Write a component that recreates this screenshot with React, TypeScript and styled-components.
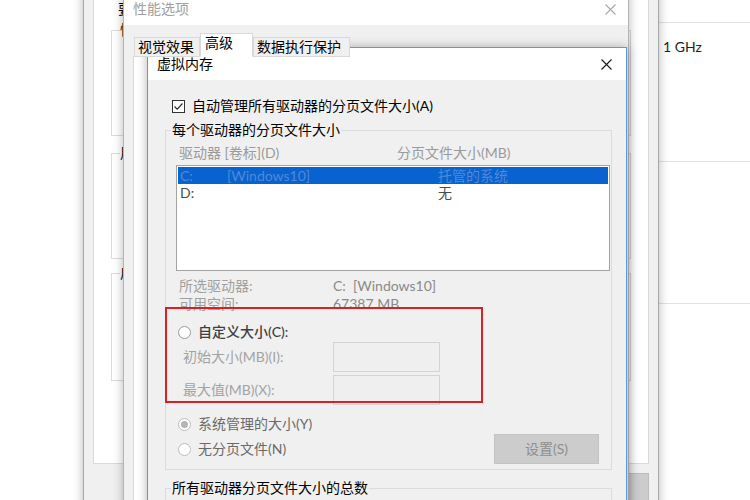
import React from "react";
import styled, { createGlobalStyle } from "styled-components";

const GlobalStyle = createGlobalStyle`
  html, body { margin: 0; padding: 0; background: #fff; }
  body { font-family: Lato, "Noto Sans CJK SC", sans-serif; font-size: 14px; }
  * { box-sizing: border-box; }
`;

const Desktop = styled.div`
  position: relative;
  width: 750px;
  height: 500px;
  overflow: hidden;
  background: #fff;
`;

/* ---------- back: system control panel ---------- */
const SystemPanel = styled.div`
  position: absolute;
  inset: 0;
  display: grid;
  grid-template-columns: 659px 1fr;
`;
const InfoColumn = styled.div`
  grid-column: 2;
  display: flex;
  flex-direction: column;
`;
const InfoSection = styled.div<{ $h: number }>`
  height: ${(p) => p.$h}px;
  border-bottom: 1px solid #e2e2e2;
  padding: 15px 0 0 4px;
  color: #1e1e1e;
  line-height: 18px;
`;

/* ---------- generic window chrome ---------- */
const Window = styled.div<{ $l: number; $t: number; $w: number; $h: number; $border: string }>`
  position: absolute;
  left: ${(p) => p.$l}px;
  top: ${(p) => p.$t}px;
  width: ${(p) => p.$w}px;
  height: ${(p) => p.$h}px;
  background: #f0f0f0;
  border: 1px solid ${(p) => p.$border};
  box-shadow: 0 0 10px rgba(0, 0, 0, 0.28);
  display: flex;
  flex-direction: column;
`;
const TitleBar = styled.div<{ $active?: boolean }>`
  height: 32px;
  flex: none;
  background: #fff;
  display: flex;
  align-items: center;
  padding-left: 9px;
  color: ${(p) => (p.$active ? "#000" : "#a0a0a0")};
  line-height: 18px;
`;
const TitleText = styled.span`
  flex: 1;
`;
const CloseBtn = styled.div<{ $w: number }>`
  width: ${(p) => p.$w}px;
  height: 100%;
  display: flex;
  align-items: center;
  justify-content: center;
`;

const CloseIcon = ({ color, size = 11 }: { color: string; size?: number }) => (
  <svg width={size} height={size} viewBox="0 0 11 11">
    <path d="M0.5 0.5 L10.5 10.5 M10.5 0.5 L0.5 10.5" stroke={color} strokeWidth="1.1" fill="none" />
  </svg>
);

/* ---------- system properties (behind) ---------- */
const SysBody = styled.div`
  flex: 1;
  padding: 20px 9px 0;
  display: flex;
  flex-direction: column;
`;
const SysPage = styled.div`
  height: 473px;
  flex: none;
  background: #fff;
  border: 1px solid #d9d9d9;
  padding: 8px 17px 0 17px;
  display: flex;
  flex-direction: column;
  line-height: 18px;
  color: #000;
`;
const SysNote = styled.span`
  margin-left: 7px;
`;
const SysGroup = styled.div<{ $mt: number; $h: number }>`
  position: relative;
  margin-top: ${(p) => p.$mt}px;
  height: ${(p) => p.$h}px;
  border: 1px solid #dcdcdc;
`;
const SysGroupLabel = styled.span`
  position: absolute;
  top: -10px;
  left: 8px;
  background: #fff;
  color: #000;
  line-height: 18px;
`;
const SysButtonRow = styled.div`
  display: flex;
  justify-content: flex-end;
  margin-top: 9px;
`;
const SysButton = styled.div`
  width: 75px;
  height: 28px;
  background: #cccccc;
  border: 1px solid #bdbdbd;
`;

/* ---------- performance options ---------- */
const PerfBody = styled.div`
  flex: 1;
  padding: 8px 9px 0 9px;
  display: flex;
  flex-direction: column;
`;
const TabStrip = styled.div`
  display: flex;
  align-items: flex-end;
  height: 24px;
  margin-bottom: -1px;
  padding-left: 1px;
  position: relative;
  z-index: 1;
`;
const Tab = styled.div<{ $w: number; $sel?: boolean }>`
  width: ${(p) => p.$w}px;
  height: ${(p) => (p.$sel ? 24 : 20)}px;
  background: ${(p) => (p.$sel ? "#fff" : "#f0f0f0")};
  border: 1px solid #d9d9d9;
  border-bottom-color: ${(p) => (p.$sel ? "#fff" : "#d9d9d9")};
  padding: ${(p) => (p.$sel ? "0 0 0 4px" : "0 0 0 3px")};
  line-height: 17px;
  color: #000;
  white-space: nowrap;
  overflow: hidden;
`;
const PerfPage = styled.div`
  flex: 1;
  background: #fff;
  border: 1px solid #d9d9d9;
`;

/* ---------- virtual memory dialog ---------- */
const VmBody = styled.div`
  flex: 1;
  padding: 17px 14px 0 17px;
  display: flex;
  flex-direction: column;
  line-height: 18px;
`;
const CheckRow = styled.label`
  display: flex;
  align-items: center;
  height: 18px;
  padding-left: 7px;
  gap: 7px;
  color: #000;
`;
const CheckBox = styled.span`
  width: 13px;
  height: 13px;
  border: 1px solid #333;
  background: #fff;
  display: flex;
  align-items: center;
  justify-content: center;
`;
const Group = styled.div<{ $mt: number; $h?: number }>`
  position: relative;
  margin-top: ${(p) => p.$mt}px;
  ${(p) => (p.$h ? `height: ${p.$h}px;` : "")}
  border: 1px solid #dcdcdc;
  padding: 13px 1px 5px 10px;
  display: flex;
  flex-direction: column;
`;
const Legend = styled.span`
  position: absolute;
  top: -10px;
  left: 5px;
  padding: 0 1px;
  background: #f0f0f0;
  color: #000;
  line-height: 18px;
`;
const HeaderRow = styled.div`
  display: grid;
  grid-template-columns: 218px 1fr;
  padding-left: 3px;
  margin-bottom: 3px;
  color: #9a9a9a;
`;
const ListBox = styled.div`
  height: 106px;
  background: #fff;
  border: 1px solid #a3a3a3;
  padding: 1px;
`;
const ListRow = styled.div<{ $sel?: boolean }>`
  display: grid;
  grid-template-columns: 47px 211px 1fr;
  height: 17px;
  line-height: 17px;
  padding-left: 2px;
  background: ${(p) => (p.$sel ? "#0862cf" : "transparent")};
  color: ${(p) => (p.$sel ? "#5288d6" : "#4a4a4a")};
`;
const InfoGrid = styled.div`
  display: grid;
  grid-template-columns: 154px 1fr;
  grid-auto-rows: 18px;
  margin-top: 6px;
  padding-left: 3px;
`;
const InfoLabel = styled.span`
  color: #a0a0a0;
`;
const InfoValue = styled.span`
  color: #8a8a8a;
`;
const CustomBlock = styled.div`
  position: relative;
  display: flex;
  flex-direction: column;
`;
const RedFrame = styled.div`
  position: absolute;
  left: -11px;
  top: -6px;
  width: 318px;
  height: 96px;
  border: 2px solid #dc1f22;
  pointer-events: none;
`;
const RadioRow = styled.div<{ $mt: number; $h?: number }>`
  display: flex;
  align-items: center;
  height: ${(p) => p.$h ?? 18}px;
  margin-top: ${(p) => p.$mt}px;
`;
const RadioLabel = styled.span<{ $strong?: boolean }>`
  display: flex;
  align-items: center;
  gap: 7px;
  padding-left: 2px;
  color: ${(p) => (p.$strong ? "#3f3f3f" : "#6a6a6a")};
  font-weight: ${(p) => (p.$strong ? 500 : 400)};
  flex: 1;
`;
const Radio = styled.span<{ $on?: boolean; $edge: string }>`
  width: 13px;
  height: 13px;
  border-radius: 50%;
  border: 1px solid ${(p) => p.$edge};
  background: #fff;
  display: flex;
  align-items: center;
  justify-content: center;
  &::after {
    content: "";
    display: ${(p) => (p.$on ? "block" : "none")};
    width: 7px;
    height: 7px;
    border-radius: 50%;
    background: #b4b4b4;
  }
`;
const FieldRow = styled.div<{ $mt: number }>`
  display: grid;
  grid-template-columns: 150px 107px;
  align-items: center;
  height: 30px;
  margin-top: ${(p) => p.$mt}px;
  padding-left: 7px;
  color: #a3a3a3;
`;
const FieldBox = styled.div`
  height: 30px;
  border: 1px solid #d4d4d4;
  background: #efefef;
`;
const SetButton = styled.div`
  width: 105px;
  height: 30px;
  margin-right: 11px;
  background: #cccccc;
  border: 1px solid #c3c3c3;
  color: #8e8e8e;
  display: flex;
  align-items: center;
  justify-content: center;
`;

export default function App() {
  return (
    <>
      <GlobalStyle />
      <Desktop>
        <SystemPanel>
          <InfoColumn>
            <InfoSection $h={23} />
            <InfoSection $h={139}>1 GHz</InfoSection>
            <InfoSection $h={142} />
          </InfoColumn>
        </SystemPanel>

        <Window $l={83} $t={-30} $w={576} $h={560} $border="#a8a8a8">
          <SysBody>
            <SysPage>
              <SysNote>要</SysNote>
              <SysGroup $mt={12} $h={106}>
                <SysGroupLabel>性</SysGroupLabel>
              </SysGroup>
              <SysGroup $mt={17} $h={106}>
                <SysGroupLabel>用</SysGroupLabel>
              </SysGroup>
              <SysGroup $mt={14} $h={108}>
                <SysGroupLabel>启</SysGroupLabel>
              </SysGroup>
            </SysPage>
            <SysButtonRow>
              <SysButton />
            </SysButtonRow>
          </SysBody>
        </Window>

        <Window $l={123} $t={-8} $w={506} $h={560} $border="#b4b4b4">
          <TitleBar>
            <TitleText>性能选项</TitleText>
            <CloseBtn $w={36}>
              <CloseIcon color="#a8a8a8" />
            </CloseBtn>
          </TitleBar>
          <PerfBody>
            <TabStrip>
              <Tab $w={66}>视觉效果</Tab>
              <Tab $w={53} $sel>
                高级
              </Tab>
              <Tab $w={97}>数据执行保护</Tab>
            </TabStrip>
            <PerfPage />
          </PerfBody>
        </Window>

        <Window $l={147} $t={47} $w={480} $h={520} $border="#5f98d4">
          <TitleBar $active>
            <TitleText>虚拟内存</TitleText>
            <CloseBtn $w={40}>
              <CloseIcon color="#1a1a1a" />
            </CloseBtn>
          </TitleBar>
          <VmBody>
            <CheckRow>
              <CheckBox>
                <svg width="11" height="11" viewBox="0 0 11 11">
                  <path d="M1.5 5.5 L4.2 8.2 L9.5 2.5" stroke="#2b2b2b" strokeWidth="1.2" fill="none" />
                </svg>
              </CheckBox>
              自动管理所有驱动器的分页文件大小(A)
            </CheckRow>

            <Group $mt={15}>
              <Legend>每个驱动器的分页文件大小</Legend>
              <HeaderRow>
                <span>驱动器 [卷标](D)</span>
                <span>分页文件大小(MB)</span>
              </HeaderRow>
              <ListBox>
                <ListRow $sel>
                  <span>C:</span>
                  <span>[Windows10]</span>
                  <span>托管的系统</span>
                </ListRow>
                <ListRow>
                  <span>D:</span>
                  <span></span>
                  <span>无</span>
                </ListRow>
              </ListBox>
              <InfoGrid>
                <InfoLabel>所选驱动器:</InfoLabel>
                <InfoValue>C:&nbsp;&nbsp;[Windows10]</InfoValue>
                <InfoLabel>可用空间:</InfoLabel>
                <InfoValue>67387 MB</InfoValue>
              </InfoGrid>
              <CustomBlock>
                <RadioRow $mt={10}>
                  <RadioLabel $strong>
                    <Radio $edge="#9a9a9a" />
                    自定义大小(C):
                  </RadioLabel>
                </RadioRow>
                <FieldRow $mt={1}>
                  <span>初始大小(MB)(I):</span>
                  <FieldBox />
                </FieldRow>
                <FieldRow $mt={3}>
                  <span>最大值(MB)(X):</span>
                  <FieldBox />
                </FieldRow>
                <RedFrame />
              </CustomBlock>
              <RadioRow $mt={10}>
                <RadioLabel>
                  <Radio $on $edge="#bdbdbd" />
                  系统管理的大小(Y)
                </RadioLabel>
              </RadioRow>
              <RadioRow $mt={1} $h={30}>
                <RadioLabel>
                  <Radio $edge="#bdbdbd" />
                  无分页文件(N)
                </RadioLabel>
                <SetButton>设置(S)</SetButton>
              </RadioRow>
            </Group>

            <Group $mt={18} $h={60}>
              <Legend>所有驱动器分页文件大小的总数</Legend>
            </Group>
          </VmBody>
        </Window>
      </Desktop>
    </>
  );
}
